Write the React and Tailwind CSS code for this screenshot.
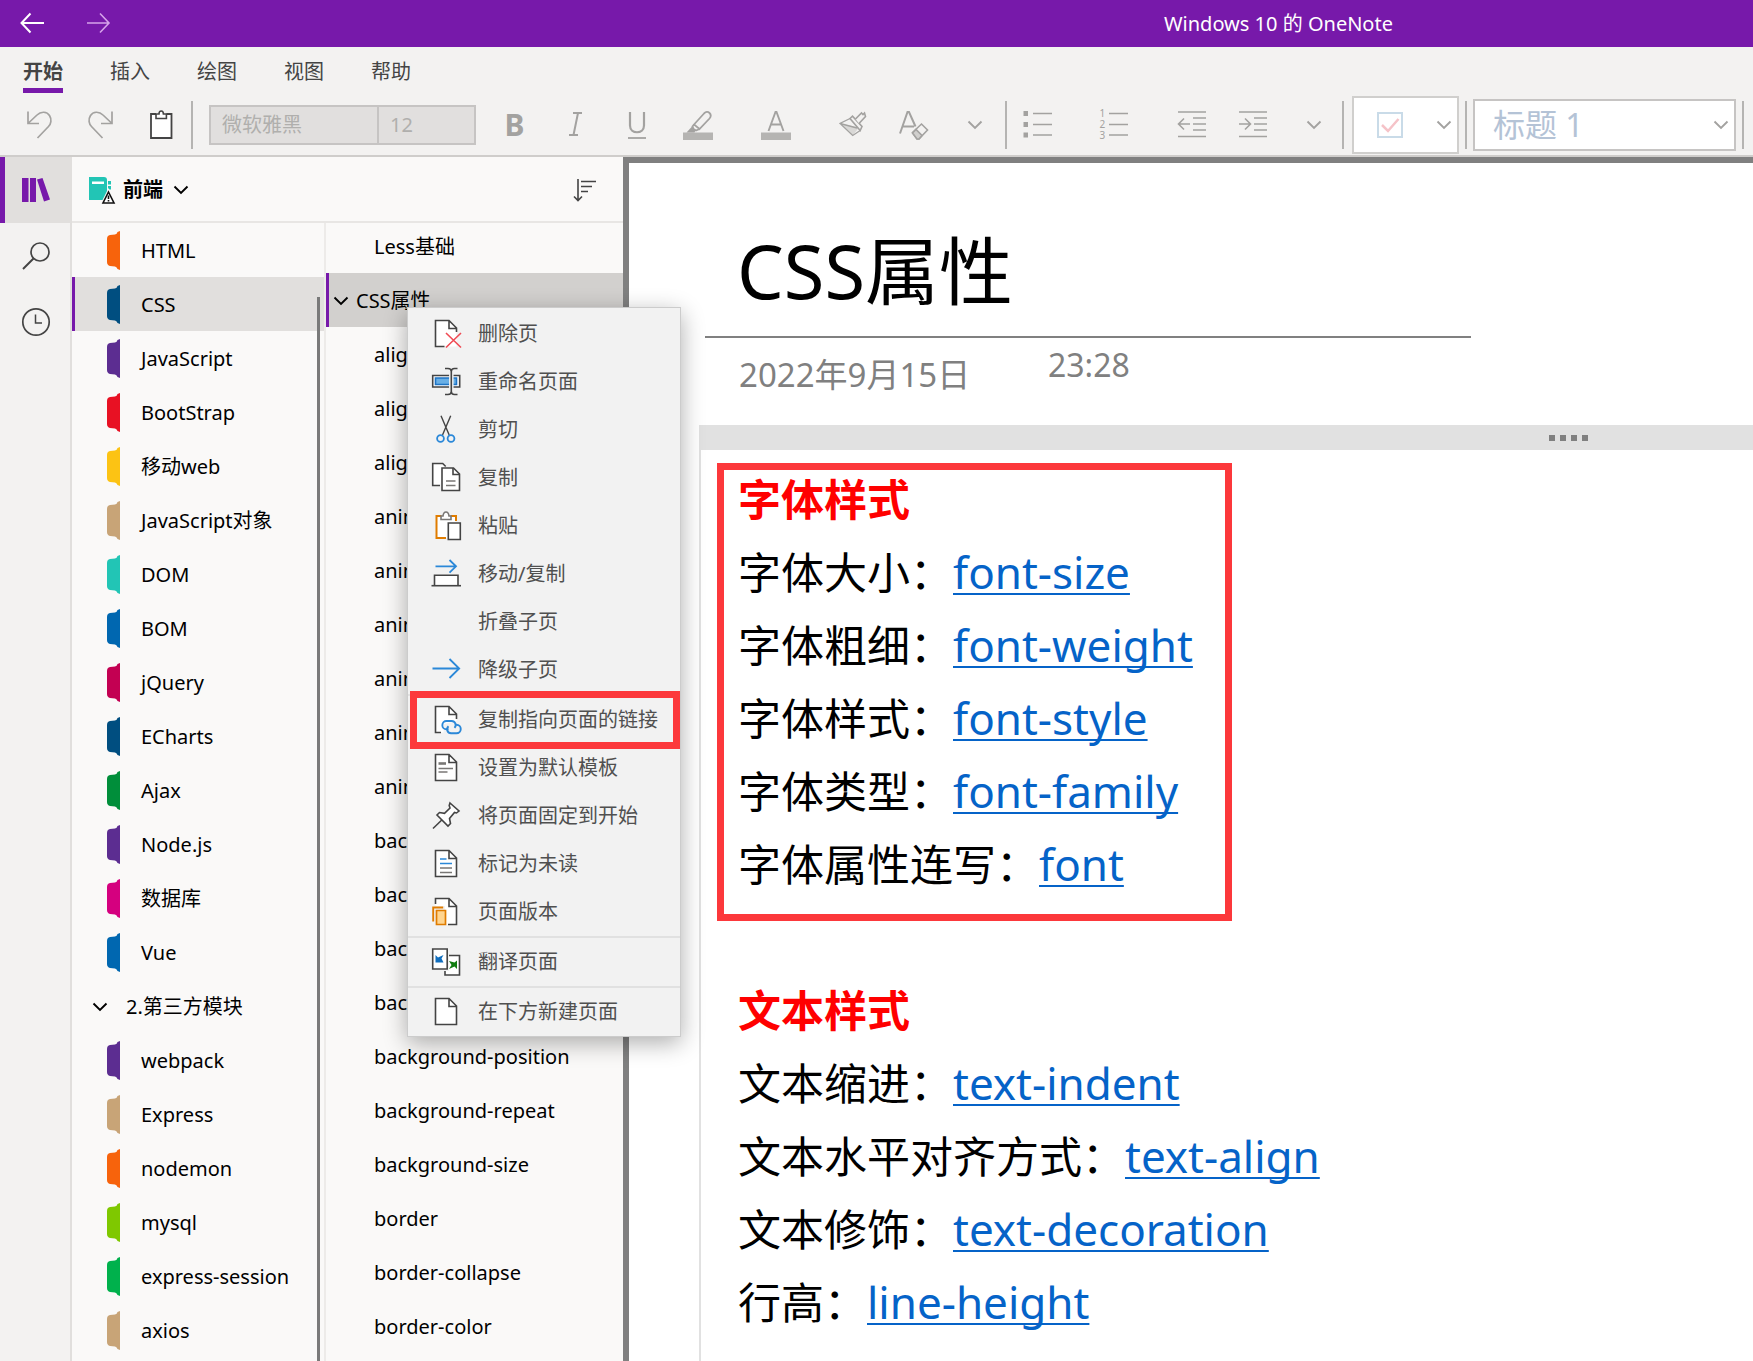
import React from "react";

const SECTIONS = [
  { name: "HTML", color: "#f7630c" },
  { name: "CSS", color: "#004e80", active: true },
  { name: "JavaScript", color: "#5c2d91" },
  { name: "BootStrap", color: "#e81123" },
  { name: "移动web", color: "#fcc314" },
  { name: "JavaScript对象", color: "#c8a477" },
  { name: "DOM", color: "#22c5b5" },
  { name: "BOM", color: "#0067b0" },
  { name: "jQuery", color: "#c30052" },
  { name: "ECharts", color: "#004e80" },
  { name: "Ajax", color: "#008e3a" },
  { name: "Node.js", color: "#5c2d91" },
  { name: "数据库", color: "#d5007f" },
  { name: "Vue", color: "#0067b0" },
  { name: "2.第三方模块", group: true },
  { name: "webpack", color: "#5c2d91" },
  { name: "Express", color: "#c8a477" },
  { name: "nodemon", color: "#f7630c" },
  { name: "mysql", color: "#7fc800" },
  { name: "express-session", color: "#00b14c" },
  { name: "axios", color: "#c8a477" },
];

const PAGES = [
  "alig",
  "alig",
  "alig",
  "anim",
  "anim",
  "anim",
  "anim",
  "anim",
  "anim",
  "bac",
  "bac",
  "bac",
  "bac",
  "background-position",
  "background-repeat",
  "background-size",
  "border",
  "border-collapse",
  "border-color",
];

const FONT_LINES = [
  ["字体大小：", "font-size"],
  ["字体粗细：", "font-weight"],
  ["字体样式：", "font-style"],
  ["字体类型：", "font-family"],
  ["字体属性连写：", "font"],
];

const TEXT_LINES = [
  ["文本缩进：", "text-indent"],
  ["文本水平对齐方式：", "text-align"],
  ["文本修饰：", "text-decoration"],
  ["行高：", "line-height"],
];

function Icon({ children, className = "", size = 32 }) {
  return (
    <svg
      viewBox="0 0 32 32"
      width={size}
      height={size}
      fill="none"
      stroke="currentColor"
      strokeWidth="1.6"
      className={"shrink-0 " + className}
      aria-hidden="true"
    >
      {children}
    </svg>
  );
}

function Chevron({ className = "" }) {
  return (
    <svg viewBox="0 0 16 10" width="16" height="10" fill="none" stroke="currentColor" strokeWidth="1.9" className={"shrink-0 " + className} aria-hidden="true">
      <path d="M1.500 1.500 8 8l6.500-6.500" />
    </svg>
  );
}

function Doc({ open }) {
  return (
    <>
      <path d="M19 2.500H5.500v26h21V10z" fill="#fff" stroke="none" />
      <path d={open ? "M14.500 28.500h-9v-26H19l7.500 7.500v4M19 2.500v8h7.500" : "M19 2.500H5.500v26h21V10zM19 2.500v8h7.500"} />
    </>
  );
}

const MENU = [
  {
    label: "删除页",
    icon: (
      <>
        <Doc open />
        <path d="m16 15 15 14.500M31 15 16 29.500" stroke="#f04b54" />
      </>
    ),
  },
  {
    label: "重命名页面",
    icon: (
      <>
        <path d="M2.700 9.500h27v11.500h-27z" fill="#fff" />
        <path d="M5.500 12h21v6.500h-21z" fill="#69afe5" stroke="#1e74c5" />
        <path d="M21.300 4v23" stroke="#f2f2f2" strokeWidth="4.500" />
        <path d="M15 2.500h3q3.300 0 3.300 3v20q0 3-3.300 3h-3M27.500 2.500h-3q-3.200 0-3.200 3v20q0 3 3.200 3h3" />
      </>
    ),
  },
  {
    label: "剪切",
    icon: (
      <>
        <path d="M11 1.700 19.200 21M20.700 1.700 12.500 21" strokeWidth="1.400" />
        <circle cx="10.500" cy="24.500" r="3.400" stroke="#2b88d8" strokeWidth="1.800" />
        <circle cx="21" cy="24.500" r="3.400" stroke="#2b88d8" strokeWidth="1.800" />
      </>
    ),
  },
  {
    label: "复制",
    icon: (
      <>
        <path d="M10 23.500H2.700v-22h10l3 3" fill="#fff" />
        <path d="M12 6h11.500l6 6v16.500H12z" fill="#fff" />
        <path d="M23 6v6.500h6.500" />
        <path d="M16 19h9.500M16 23.500h9.500" stroke="#797775" />
      </>
    ),
  },
  {
    label: "粘贴",
    icon: (
      <>
        <path d="M6.500 6h19v22h-19z" fill="#fff" stroke="none" />
        <path d="M16 28H6.500V6h5M20.500 6H26v5" stroke="#e07c00" strokeWidth="2" />
        <path d="M11 9.500V6h2q.5-4 3-4t3 4h2v3.500z" fill="#fff" stroke="#797775" />
        <path d="M18.300 13h12v16.500h-12z" fill="#fff" />
      </>
    ),
  },
  {
    label: "移动/复制",
    icon: (
      <>
        <path d="M5.500 8.300H26M19.500 2l6.500 6.300-6.500 6.300" stroke="#2b88d8" strokeWidth="1.800" />
        <path d="M4.500 27.500V17.300h23.500v10.200" fill="#fff" />
        <path d="M1.500 27.700h29.500" />
      </>
    ),
  },
  { label: "折叠子页", icon: null },
  { label: "降级子页", icon: <path d="M2.500 14.500h27M19.500 5l9.700 9.500-9.700 9.500" stroke="#2b88d8" strokeWidth="1.800" /> },
  {
    label: "复制指向页面的链接",
    separator: true,
    marked: true,
    icon: (
      <>
        <path d="M19 2.500H5.500v26h8L14 20l12.500-3V10z" fill="#fff" stroke="none" />
        <path d="M11 28.500H5.500v-26H19l7.500 7.500v5M19 2.500v8h7.500" />
        <path d="M18.500 25.300h-2a4 4 0 0 1 0-8.300h5a4 4 0 0 1 3 6.800" stroke="#2b88d8" strokeWidth="1.900" />
        <path d="M25 20.800h1.500a4 4 0 0 1 0 8.500h-5.500a4 4 0 0 1-2.500-7" stroke="#2b88d8" strokeWidth="1.900" />
      </>
    ),
  },
  {
    label: "设置为默认模板",
    icon: (
      <>
        <Doc />
        <path d="M8.500 11.500h7.500" stroke="#797775" strokeWidth="2.600" />
        <path d="M8.500 16.500h14.500M8.500 20h9" stroke="#797775" />
      </>
    ),
  },
  {
    label: "将页面固定到开始",
    icon: (
      <>
        <path d="m20 3 9 8-2.500 2-2-.5-5 6 1 5-2.500 2.500L7 15l2.500-2.500 5 .8 5.500-5.300-.8-2.500z" fill="#fff" />
        <path d="M11.800 20 3 28.500" />
      </>
    ),
  },
  {
    label: "标记为未读",
    icon: (
      <>
        <Doc />
        <path d="M10 11h6.500M10 15.500h12" stroke="#2b88d8" strokeWidth="1.700" />
        <path d="M10 20h12M10 24.500h12" stroke="#797775" />
      </>
    ),
  },
  {
    label: "页面版本",
    icon: (
      <>
        <path d="M5.500 2.500H19L26.500 10v18.500H15V10H5.500z" fill="#fff" stroke="none" />
        <path d="M5.500 8V2.500H19l7.500 7.500v18.500H18M19 2.500v8h7.500" />
        <path d="M3.200 25.500V11.500h10" stroke="#e07c00" strokeWidth="1.900" />
        <path d="M6.500 14.500h9v14h-9z" fill="#ffd590" stroke="#e07c00" strokeWidth="1.700" />
      </>
    ),
  },
  {
    label: "翻译页面",
    separator: true,
    icon: (
      <>
        <path d="M15 9.500h14.500v19.500H15z" fill="#fff" />
        <path d="M1 1.500h18v23.500H1z" fill="#f2f2f2" stroke="none" />
        <path d="M2.700 3h14.500v20H2.700z" fill="#fff" />
        <path d="M5.500 9 8 11.500l5.500-2.500-2 3.500 2 4H5.500z" fill="#106ebe" stroke="none" />
        <path d="M27 14.500v8.500l-2.500-2.500-5.500 2.500 2.500-4-2.500-4 5.500 1.500z" fill="#107c10" stroke="none" />
      </>
    ),
  },
  { label: "在下方新建页面", separator: true, icon: <Doc /> },
];

function ToolButton({ label, children, className = "", tone = "text-[#a3a2a0]" }) {
  return (
    <button type="button" aria-label={label} className={"flex h-12 w-[61px] shrink-0 items-center justify-center " + tone + " " + className}>
      {children}
    </button>
  );
}

function Divider({ className = "" }) {
  return <div className={"h-12 w-[2px] shrink-0 bg-[#b5b4b2] " + className} />;
}

function TitleBar() {
  return (
    <header className="flex h-[47px] shrink-0 items-center bg-[#7719aa] text-white">
      <button type="button" aria-label="后退" className="ml-4 flex h-10 w-8 items-center justify-center">
        <Icon>
          <path d="M28 15H6M14.500 5.500 5.500 15l9 9.500" strokeWidth="2" />
        </Icon>
      </button>
      <button type="button" aria-label="前进" className="ml-[34px] flex h-10 w-8 items-center justify-center text-[#d6a3ea]">
        <Icon>
          <path d="M5 15h22M18 5.500l9 9.500-9 9.500" />
        </Icon>
      </button>
      <h1 className="ml-[1050px] text-xl leading-7 whitespace-nowrap">Windows 10 的 OneNote</h1>
    </header>
  );
}

function Ribbon() {
  return (
    <div className="shrink-0 border-b-2 border-[#cfcdcb] bg-[#f3f2f1]">
      <nav className="flex h-[47px] gap-[47px] pl-[23px] text-xl leading-7 text-[#444]">
        <a href="#home" className="flex flex-col font-bold">
          <span className="mt-[11px]">开始</span>
          <span className="mt-[2px] h-[5px] bg-[#7719aa]" />
        </a>
        {["插入", "绘图", "视图", "帮助"].map((t) => (
          <a key={t} href="#tab" className="mt-[11px]">
            {t}
          </a>
        ))}
      </nav>
      <div className="flex h-[61px] items-center pl-2">
        <ToolButton label="撤消">
          <Icon>
            <path d="M5 2.500v12h11M5.500 14 14 6c4-4 10-3.500 12.500.5s1.500 8.500-1 11L14.500 29" strokeWidth="1.700" />
          </Icon>
        </ToolButton>
        <ToolButton label="恢复">
          <Icon>
            <path d="M28 2.500v12H17M27.500 14 19 6C15 2 9 2.500 6.500 6.500s-1.500 8.500 1 11L18.500 29" strokeWidth="1.700" />
          </Icon>
        </ToolButton>
        <ToolButton label="粘贴" tone="text-[#444]">
          <Icon>
            <path d="M6 5h20.500v24H6z" fill="#fff" stroke="none" />
            <path d="M11 5H6v24h20.500V5h-5" strokeWidth="1.800" />
            <path d="M11 9.500V5h3q0-3 2.200-3t2.200 3h3v4.500z" fill="#fff" strokeWidth="1.600" />
          </Icon>
        </ToolButton>
        <Divider />
        <div className="ml-4 flex h-10 w-[267px] shrink-0 border-2 border-[#c6c4c3] bg-[#e1dfde] text-xl text-[#b0afad]">
          <input aria-label="字体" defaultValue="微软雅黑" className="w-[168px] border-r-2 border-[#c6c4c3] pl-[11px] outline-none" />
          <input aria-label="字号" defaultValue="12" className="min-w-0 flex-1 pl-[11px] outline-none" />
        </div>
        <ToolButton label="加粗" className="ml-2 text-[30px] leading-8 font-bold">
          B
        </ToolButton>
        <ToolButton label="倾斜">
          <Icon>
            <path d="M13 4h9M9 26h9M18 4l-4.500 22" strokeWidth="2" />
          </Icon>
        </ToolButton>
        <ToolButton label="下划线">
          <Icon>
            <path d="M9 3v13.500c0 9 14 9 14 0V3" strokeWidth="2.200" />
            <path d="M7 29h18" strokeWidth="1.800" />
          </Icon>
        </ToolButton>
        <ToolButton label="突出显示" className="mr-[17px]">
          <Icon>
            <path d="M1 23.500h30V31H1z" fill="#b5b4b2" stroke="none" />
            <path d="m12 15.500 10-11q3-3 5.500-.5t0 5.500L17.500 20zM12 15.500l-1.500 2 1 2.500 2.500 1.500 3.500-1.500" strokeWidth="1.800" />
            <path d="m10 17.500-5.500 6h8l1-2z" fill="currentColor" stroke="none" />
          </Icon>
        </ToolButton>
        <ToolButton label="字体颜色" className="mr-4">
          <Icon>
            <path d="M1 23.500h30V31H1z" fill="#b5b4b2" stroke="none" />
            <path d="m8.500 22 7-19h1l7 19M11 15.500h10" strokeWidth="1.900" />
          </Icon>
        </ToolButton>
        <ToolButton label="格式刷">
          <Icon>
            <path d="m3 14.500 19 4-6.300 8z" fill="#d9d8d6" stroke="none" />
            <path d="M13 9.500 3 14.500l12.700 12 7.500-5M3 14.500l17 4.500" strokeWidth="1.300" />
            <path d="m13 9.500 2.500-2.300 9.500 10.300-1.800 4z" fill="#f3f2f1" />
            <path d="m18.500 10 6-6 1.500 1.500 1.500-1.500 1 3.500-6.500 7" fill="#f3f2f1" />
          </Icon>
        </ToolButton>
        <ToolButton label="清除格式">
          <Icon>
            <path d="m2 24.500 7.500-21.500h1.500l6.500 14.500M5 17.500h11" strokeWidth="2" />
            <path d="m14.500 23.500 9-8.500 6 6-8.500 9h-2z" />
            <path d="m14.500 24 3.500-3.500 6 6-3 3.500h-2z" fill="#d0cfcd" />
          </Icon>
        </ToolButton>
        <ToolButton label="更多格式">
          <Chevron />
        </ToolButton>
        <Divider />
        <ToolButton label="项目符号" className="mr-4">
          <Icon>
            <path d="M1.500 2h4.500v5h-4.500zM1.500 13h4.500v5h-4.500zM1.500 23.500h4.500v5h-4.500z" fill="currentColor" stroke="none" />
            <path d="M11 4.500h19M11 15.500h19M11 26h19" strokeWidth="1.700" />
          </Icon>
        </ToolButton>
        <ToolButton label="编号" className="mr-4">
          <span className="flex w-[30px] items-center gap-1">
            <span className="flex flex-col text-[10px] leading-[11px]">
              <span>1</span>
              <span>2</span>
              <span>3</span>
            </span>
            <svg viewBox="0 0 20 32" width="20" height="32" fill="none" stroke="currentColor" strokeWidth="1.700" aria-hidden="true">
              <path d="M0 4.500h19M0 15.500h19M0 26h19" />
            </svg>
          </span>
        </ToolButton>
        <ToolButton label="减少缩进">
          <Icon>
            <path d="M2 3h28M17 9h13M17 15h13M17 21h13M2 27.500h28" strokeWidth="1.700" />
            <path d="M14 15H3M8 9.500 2.500 15 8 20.500" />
          </Icon>
        </ToolButton>
        <ToolButton label="增加缩进">
          <Icon>
            <path d="M2 3h28M17 9h13M17 15h13M17 21h13M2 27.500h28" strokeWidth="1.700" />
            <path d="M2 15h11.500M8 9.500l5.500 5.500L8 20.500" />
          </Icon>
        </ToolButton>
        <ToolButton label="更多段落选项">
          <Chevron />
        </ToolButton>
        <Divider className="-ml-[2px]" />
        <div className="ml-2 flex h-[58px] w-[107px] shrink-0 items-center border-2 border-[#d0cfcd] bg-white pl-[23px]">
          <label className="relative flex">
            <input type="checkbox" aria-label="待办事项" defaultChecked className="size-[26px] appearance-none border-2 border-[#c9dbe8] bg-white" />
            <svg viewBox="0 0 26 26" width="26" height="26" fill="none" stroke="#f5c3c8" strokeWidth="2.500" className="pointer-events-none absolute inset-0" aria-hidden="true">
              <path d="m5 13 6 6L21.500 7" />
            </svg>
          </label>
          <button type="button" aria-label="更多标记" className="flex h-full flex-1 items-center justify-end pr-[5px] text-[#a3a2a0]">
            <Chevron />
          </button>
        </div>
        <Divider className="ml-[6px]" />
        <div className="relative ml-[6px] w-[263px] shrink-0">
          <select aria-label="样式" className="block h-[52px] w-full appearance-none border-2 border-[#c6c4c3] bg-white pl-[18px] text-[32px] leading-[44px] text-[#b4c3d6]">
            <option>标题 1</option>
          </select>
          <Chevron className="pointer-events-none absolute top-[21px] right-[7px] text-[#a3a2a0]" />
        </div>
        <Divider className="ml-[6px]" />
      </div>
    </div>
  );
}

function Rail() {
  return (
    <aside className="flex w-[72px] shrink-0 flex-col border-r-2 border-[#e1dfdd] bg-[#f3f2f1] text-[#444]">
      <button type="button" aria-label="笔记本" className="flex h-[66px] items-center justify-center border-l-[5px] border-[#7719aa] bg-[#e1dfdd] pr-[3px] text-[#7719aa]">
        <svg viewBox="0 0 28 26" width="28" height="26" fill="currentColor" aria-hidden="true">
          <path d="M0 1h6.500v24H0zM8 1h6v24H8zM15 2.500 20.500 1 28 22.500l-6 2z" />
        </svg>
      </button>
      <button type="button" aria-label="搜索" className="flex h-[66px] items-center justify-center pl-[2px]">
        <Icon>
          <circle cx="20" cy="12" r="9" strokeWidth="1.700" />
          <path d="M13.500 18.500 3 29" strokeWidth="1.900" />
        </Icon>
      </button>
      <button type="button" aria-label="最近的笔记" className="flex h-[66px] items-center justify-center pl-[2px]">
        <Icon>
          <circle cx="16" cy="16" r="13.200" strokeWidth="1.700" />
          <path d="M15.500 8.500v8.500H22" strokeWidth="1.500" />
        </Icon>
      </button>
    </aside>
  );
}

function NotebookHeader() {
  return (
    <div className="flex h-[66px] shrink-0 items-center justify-between border-b-2 border-[#e8e6e4] pt-px pr-[25px] pl-4">
      <button type="button" className="flex items-center text-xl leading-7 font-bold text-black">
        <svg viewBox="0 0 28 28" width="28" height="28" fill="none" aria-hidden="true">
          <path d="M1 1h15q3 0 3 3v20H1z" fill="#22c5b5" />
          <path d="M20 5h3v3.500h-3zM20 10h3v3.500h-3z" fill="#22c5b5" />
          <path d="M4 5.500h12v2.500H4z" fill="#fff" />
          <path d="M20.500 12 28 28H12.500z" fill="#faf9f8" />
          <path d="m20.500 16 5.500 11H15z" fill="#fff" stroke="#111" strokeWidth="1.600" />
          <path d="M20.500 19.500v3.500M20.500 24v1.500" stroke="#111" strokeWidth="1.600" />
        </svg>
        <span className="ml-[7px]">前端</span>
        <Chevron className="ml-[10px]" />
      </button>
      <button type="button" aria-label="排序" className="text-[#444]">
        <svg viewBox="0 0 26 26" width="26" height="26" fill="none" stroke="currentColor" strokeWidth="1.600" aria-hidden="true">
          <path d="M6 2v21M2 19.500l4 4 4-4M9 4.500h15M9 9.500h11M9 14.500h7" />
        </svg>
      </button>
    </div>
  );
}

function SectionList() {
  return (
    <div className="flex w-[254px] shrink-0 overflow-hidden border-r-2 border-[#edebe9]">
      <ul className="flex-1">
        {SECTIONS.map((s) => (
          <li key={s.name}>
            <button
              type="button"
              className={
                "flex h-[54px] w-full items-center border-l-[3px] pt-px text-left text-xl leading-7 whitespace-nowrap " +
                (s.active ? "border-[#7719aa] bg-[#e1dfdd]" : "border-transparent")
              }
            >
              {s.group ? (
                <>
                  <Chevron className="ml-[17px]" />
                  <span className="ml-[18px]">{s.name}</span>
                </>
              ) : (
                <>
                  <svg viewBox="0 0 13 39" width="13" height="39" fill={s.color} className="ml-8 shrink-0" aria-hidden="true">
                    <path d="M13 0v39l-2.500-1q-.5-2-2.500-2.500L3 35q-3-1-3-4V8q0-3.500 3-4l5-.5Q10 3 10.500 1z" />
                  </svg>
                  <span className="ml-[21px]">{s.name}</span>
                </>
              )}
            </button>
          </li>
        ))}
      </ul>
      <div className="mt-[74px] mr-1 -ml-[7px] w-[3px] bg-[#7a7a7a]" />
    </div>
  );
}

function PageList() {
  return (
    <ul className="min-w-0 flex-1 overflow-hidden text-xl leading-7 whitespace-nowrap">
      <li>
        <button type="button" className="flex h-[50px] w-full items-center pb-[2px] pl-12 text-left">
          Less基础
        </button>
      </li>
      <li>
        <button type="button" className="flex h-[54px] w-full items-center border-l-[3px] border-[#7719aa] bg-[#d2d0ce] pt-px text-left">
          <Chevron className="ml-1" />
          <span className="ml-[7px]">CSS属性</span>
        </button>
      </li>
      {PAGES.map((p, i) => (
        <li key={i}>
          <button type="button" className="flex h-[54px] w-full items-center pt-px pl-12 text-left">
            {p}
          </button>
        </li>
      ))}
    </ul>
  );
}

function NoteLine({ line }) {
  return (
    <p>
      {line[0]}
      <a href={"#" + line[1]} className="text-[44px] text-[#0563c8] underline decoration-2 underline-offset-4 [text-decoration-skip-ink:none]">
        {line[1]}
      </a>
    </p>
  );
}

function Canvas() {
  return (
    <main className="min-w-0 flex-1 overflow-hidden border-t-[6px] border-l-[6px] border-[#808080] bg-white">
      <div className="ml-[76px] w-[766px] border-b-2 border-[#808080] pt-[58px] pb-[15px] pl-8">
        <h2 className="text-[74px] leading-[100px] text-black">CSS属性</h2>
      </div>
      <div className="flex h-[87px] items-start pl-[110px] text-[#808080]">
        <p className="mt-[17px] w-[309px] text-[33px] leading-[40px]">2022年9月15日</p>
        <p className="mt-[7px] text-[32px] leading-[40px]">23:28</p>
      </div>
      <section className="ml-[70px] border-l-2 border-[#e1e1e1] pb-40">
        <div className="flex h-[25px] items-center justify-end gap-[5px] bg-[#e1e1e1] pr-[165px]">
          <span className="size-[6px] bg-[#808080]" />
          <span className="size-[6px] bg-[#808080]" />
          <span className="size-[6px] bg-[#808080]" />
          <span className="size-[6px] bg-[#808080]" />
        </div>
        <div className="pt-[13px] pl-[37px] text-[43px] leading-[73px] whitespace-nowrap text-black">
          <div className="relative">
            <div className="pointer-events-none absolute top-0 -left-[21px] h-[458px] w-[515px] border-[7px] border-[#fc383b]" />
            <h3 className="font-bold text-[#ff0000]">字体样式</h3>
            {FONT_LINES.map((l) => (
              <NoteLine key={l[1]} line={l} />
            ))}
          </div>
          <div className="mt-[73px]">
            <h3 className="font-bold text-[#ff0000]">文本样式</h3>
            {TEXT_LINES.map((l) => (
              <NoteLine key={l[1]} line={l} />
            ))}
          </div>
        </div>
      </section>
    </main>
  );
}

function ContextMenu() {
  return (
    <div role="menu" className="absolute top-[307px] left-[407px] w-[274px] border border-[#cccccc] bg-[#f2f2f2] pt-[2px] shadow-[0_6px_22px_rgba(0,0,0,0.32)]">
      {MENU.map((m) => (
        <div key={m.label} className={m.separator ? "border-t-2 border-[#e1e1e1]" : ""}>
          <button type="button" role="menuitem" className="relative flex h-12 w-full items-center pl-[22px] text-xl leading-7 whitespace-nowrap text-[#505050]">
            <Icon className="text-[#444]">{m.icon}</Icon>
            <span className="ml-4">{m.label}</span>
            {m.marked && <span className="pointer-events-none absolute -inset-y-[5px] right-0 left-[2px] border-[7px] border-[#fc383b]" />}
          </button>
        </div>
      ))}
    </div>
  );
}

export default function App() {
  return (
    <div className="relative flex h-screen flex-col overflow-hidden bg-[#faf9f8] font-['Noto_Sans','Noto_Sans_CJK_SC',sans-serif] text-black">
      <TitleBar />
      <Ribbon />
      <div className="flex min-h-0 flex-1">
        <Rail />
        <div className="flex w-[551px] shrink-0 flex-col">
          <NotebookHeader />
          <div className="flex min-h-0 flex-1">
            <SectionList />
            <PageList />
          </div>
        </div>
        <Canvas />
      </div>
      <ContextMenu />
    </div>
  );
}
